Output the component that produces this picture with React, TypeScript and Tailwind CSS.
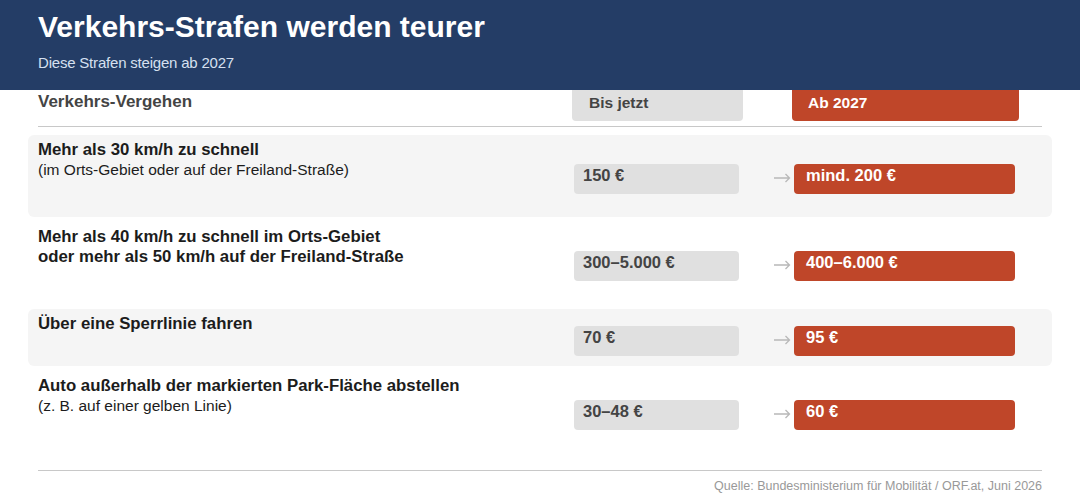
const ROWS = [
  {
    title: ['Mehr als 30 km/h zu schnell'],
    note: '(im Orts-Gebiet oder auf der Freiland-Straße)',
    before: '150 €',
    after: 'mind. 200 €',
    shaded: true,
    tall: true,
  },
  {
    title: ['Mehr als 40 km/h zu schnell im Orts-Gebiet', 'oder mehr als 50 km/h auf der Freiland-Straße'],
    before: '300–5.000 €',
    after: '400–6.000 €',
    shaded: false,
    tall: true,
  },
  {
    title: ['Über eine Sperrlinie fahren'],
    before: '70 €',
    after: '95 €',
    shaded: true,
    tall: false,
  },
  {
    title: ['Auto außerhalb der markierten Park-Fläche abstellen'],
    note: '(z. B. auf einer gelben Linie)',
    before: '30–48 €',
    after: '60 €',
    shaded: false,
    tall: true,
  },
];

function Arrow() {
  return (
    <svg width="17" height="10" viewBox="0 0 17 10" fill="none">
      <path d="M0 5h15.5M11.5 1l4 4-4 4" stroke="#b8b8b8" strokeWidth="1.3" />
    </svg>
  );
}

export default function App() {
  return (
    <div className="w-[1080px] h-[498px] bg-white font-['Liberation_Sans',Arial,sans-serif] overflow-hidden">
      {/* Title band */}
      <header className="h-[90px] bg-[#243d66] px-[38px] pt-[9px]">
        <h1 className="text-[30px] leading-[36px] font-bold text-white">Verkehrs-Strafen werden teurer</h1>
        <p className="mt-[9px] text-[15px] leading-[18px] text-[#d6e0f0] tracking-[-0.2px]">
          Diese Strafen steigen ab 2027
        </p>
      </header>

      <div className="px-[38px]">
        {/* Column heads */}
        <div className="flex items-start h-[31px]">
          <div className="w-[534px] pt-[2px] text-[17px] leading-[20px] font-bold text-[#444]">Verkehrs-Vergehen</div>
          <div className="w-[171px] h-[31px] rounded-b-[4px] bg-[#e0e0e0] pl-[17px] pt-[3px] text-[15.5px] leading-[19px] font-bold text-[#444]">
            Bis jetzt
          </div>
          <div className="w-[227px] h-[31px] ml-[49px] rounded-b-[4px] bg-[#bf4629] pl-[16px] pt-[3px] text-[15.5px] leading-[19px] font-bold text-white">
            Ab 2027
          </div>
        </div>
        <div className="mt-[5px] h-px bg-[#c8c8c8]" />

        {/* Rows */}
        <div className="mt-[8px] -mx-[10px] flex flex-col gap-[5px]">
          {ROWS.map((r, i) => (
            <div
              key={i}
              className={`flex px-[10px] rounded-[6px] ${r.tall ? 'h-[82px]' : 'h-[57px]'} ${r.shaded ? 'bg-[#f5f5f5]' : ''}`}
            >
              <div className="w-[536px] pt-[5px] text-[#1c1c1c]">
                {r.title.map((t) => (
                  <div key={t} className="text-[16.8px] leading-[20px] font-bold">
                    {t}
                  </div>
                ))}
                {r.note && <div className="text-[15.5px] leading-[19px]">{r.note}</div>}
              </div>
              <div className={`flex items-start ${r.tall ? 'pt-[29px]' : 'pt-[17px]'}`}>
                <div className="w-[165px] h-[30px] rounded-[4px] bg-[#e0e0e0] pl-[9px] pt-[1px] text-[16.5px] leading-[20px] font-bold text-[#444]">
                  {r.before}
                </div>
                <div className="w-[55px] flex justify-end pr-[3px] pt-[9px]">
                  <Arrow />
                </div>
                <div className="w-[221px] h-[30px] rounded-[4px] bg-[#bf4629] pl-[12px] pt-[1px] text-[16.5px] leading-[20px] font-bold text-white">
                  {r.after}
                </div>
              </div>
            </div>
          ))}
        </div>

        {/* Source */}
        <div className="mt-[17px] h-px bg-[#c8c8c8]" />
        <p className="mt-[7px] text-right text-[12.5px] leading-[16px] text-[#999]">
          Quelle: Bundesministerium für Mobilität / ORF.at, Juni 2026
        </p>
      </div>
    </div>
  );
}
